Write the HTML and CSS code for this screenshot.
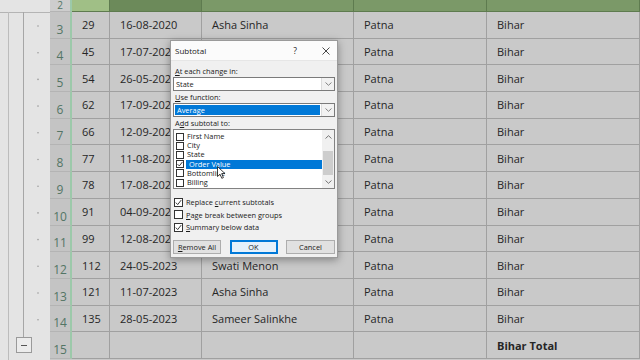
FILE: index.html
```html
<!DOCTYPE html>
<html lang="en">
  <head>
    <meta charset="UTF-8" />
    <title>Subtotal</title>
    <link rel="stylesheet" href="styles.css">
  </head>
  <body>
    <div class="wrap">
      <!-- outline gutter -->
      <div class="outline">
        <svg width="50" height="360" viewBox="0 0 50 360">
          <line x1="0" y1="12.5" x2="50" y2="12.5" stroke="#b4b4b4" />
          <line x1="8.5" y1="12" x2="8.5" y2="360" stroke="#bcbcbc" />
          <line x1="23.5" y1="12" x2="23.5" y2="338" stroke="#a6a6a6" />
          <g fill="#9c9c9c">
            <circle cx="38" cy="26" r="0.8" />
            <circle cx="38" cy="52.7" r="0.8" />
            <circle cx="38" cy="79.4" r="0.8" />
            <circle cx="38" cy="106.1" r="0.8" />
            <circle cx="38" cy="132.8" r="0.8" />
            <circle cx="38" cy="159.5" r="0.8" />
            <circle cx="38" cy="186.2" r="0.8" />
            <circle cx="38" cy="212.9" r="0.8" />
            <circle cx="38" cy="239.6" r="0.8" />
            <circle cx="38" cy="266.3" r="0.8" />
            <circle cx="38" cy="293" r="0.8" />
            <circle cx="38" cy="319.7" r="0.8" />
          </g>
          <rect x="16.5" y="337.5" width="15" height="15" fill="#ececec" stroke="#9a9a9a" />
          <line x1="21" y1="345.5" x2="27" y2="345.5" stroke="#555" />
        </svg>
      </div>

      <div class="sheet">
        <div class="cell rh top">2</div>
        <div class="cell h ha"></div>
        <div class="cell h hb"></div>
        <div class="cell h"></div>
        <div class="cell h"></div>
        <div class="cell h"></div>

        <div class="cell rh">3</div>
        <div class="cell">29</div><div class="cell">16-08-2020</div><div class="cell">Asha Sinha</div><div class="cell">Patna</div><div class="cell">Bihar</div>
        <!-- names of rows 4-11 sit under the dialog -->
        <div class="cell rh">4</div>
        <div class="cell">45</div><div class="cell">17-07-2021</div><div class="cell"></div><div class="cell">Patna</div><div class="cell">Bihar</div>
        <div class="cell rh">5</div>
        <div class="cell">54</div><div class="cell">26-05-2021</div><div class="cell"></div><div class="cell">Patna</div><div class="cell">Bihar</div>
        <div class="cell rh">6</div>
        <div class="cell">62</div><div class="cell">17-09-2021</div><div class="cell"></div><div class="cell">Patna</div><div class="cell">Bihar</div>
        <div class="cell rh">7</div>
        <div class="cell">66</div><div class="cell">12-09-2022</div><div class="cell"></div><div class="cell">Patna</div><div class="cell">Bihar</div>
        <div class="cell rh">8</div>
        <div class="cell">77</div><div class="cell">11-08-2022</div><div class="cell"></div><div class="cell">Patna</div><div class="cell">Bihar</div>
        <div class="cell rh">9</div>
        <div class="cell">78</div><div class="cell">17-08-2022</div><div class="cell"></div><div class="cell">Patna</div><div class="cell">Bihar</div>
        <div class="cell rh">10</div>
        <div class="cell">91</div><div class="cell">04-09-2022</div><div class="cell"></div><div class="cell">Patna</div><div class="cell">Bihar</div>
        <div class="cell rh">11</div>
        <div class="cell">99</div><div class="cell">12-08-2022</div><div class="cell"></div><div class="cell">Patna</div><div class="cell">Bihar</div>
        <div class="cell rh">12</div>
        <div class="cell">112</div><div class="cell">24-05-2023</div><div class="cell">Swati Menon</div><div class="cell">Patna</div><div class="cell">Bihar</div>
        <div class="cell rh">13</div>
        <div class="cell">121</div><div class="cell">11-07-2023</div><div class="cell">Asha Sinha</div><div class="cell">Patna</div><div class="cell">Bihar</div>
        <div class="cell rh">14</div>
        <div class="cell">135</div><div class="cell">28-05-2023</div><div class="cell">Sameer Salinkhe</div><div class="cell">Patna</div><div class="cell">Bihar</div>
        <div class="cell rh">15</div>
        <div class="cell"></div><div class="cell"></div><div class="cell"></div><div class="cell"></div><div class="cell total">Bihar Total</div>
      </div>
    </div>

    <!-- Subtotal dialog -->
    <div class="dialog">
      <div class="dlg-title">
        <span>Subtotal</span>
        <span class="help">?</span>
        <svg class="close" width="8" height="8" viewBox="0 0 8 8"><path d="M0.5 0.5L7.5 7.5M7.5 0.5L0.5 7.5" stroke="#333" stroke-width="0.9" fill="none" /></svg>
      </div>
      <div class="dlg-body">
        <div class="lbl first"><u>A</u>t each change in:</div>
        <div class="combo">
          <span class="val">State</span>
          <span class="arr"><svg width="7" height="4" viewBox="0 0 7 4"><path d="M0.5 0.5L3.5 3.3L6.5 0.5" stroke="#777" fill="none" stroke-width="0.9" /></svg></span>
        </div>
        <div class="lbl"><u>U</u>se function:</div>
        <div class="combo sel">
          <span class="val">Average</span>
          <span class="arr"><svg width="7" height="4" viewBox="0 0 7 4"><path d="M0.5 0.5L3.5 3.3L6.5 0.5" stroke="#777" fill="none" stroke-width="0.9" /></svg></span>
        </div>
        <div class="lbl">A<u>d</u>d subtotal to:</div>
        <div class="list">
          <div class="items">
            <div class="item"><span class="cb"></span><span class="txt">First Name</span></div>
            <div class="item"><span class="cb"></span><span class="txt">City</span></div>
            <div class="item"><span class="cb"></span><span class="txt">State</span></div>
            <div class="item on"><span class="cb"><svg width="6" height="6" viewBox="0 0 6 6"><path d="M0.6 3.2L2.3 4.9L5.5 0.9" stroke="#222" fill="none" stroke-width="0.9" /></svg></span><span class="txt">Order Value</span></div>
            <div class="item"><span class="cb"></span><span class="txt">Bottomline</span></div>
            <div class="item"><span class="cb"></span><span class="txt">Billing</span></div>
          </div>
          <div class="sbar">
            <svg width="7" height="4" viewBox="0 0 7 4"><path d="M0.5 3.5L3.5 0.7L6.5 3.5" stroke="#666" fill="none" stroke-width="0.9" /></svg>
            <div class="thumb"></div>
            <svg width="7" height="4" viewBox="0 0 7 4"><path d="M0.5 0.5L3.5 3.3L6.5 0.5" stroke="#666" fill="none" stroke-width="0.9" /></svg>
          </div>
        </div>
        <div class="opts">
          <div class="opt"><span class="cb big"><svg width="7" height="7" viewBox="0 0 7 7"><path d="M0.8 3.6L2.7 5.6L6.2 1.1" stroke="#222" fill="none" stroke-width="0.9" /></svg></span><span>Replace <u>c</u>urrent subtotals</span></div>
          <div class="opt"><span class="cb big"></span><span><u>P</u>age break between groups</span></div>
          <div class="opt"><span class="cb big"><svg width="7" height="7" viewBox="0 0 7 7"><path d="M0.8 3.6L2.7 5.6L6.2 1.1" stroke="#222" fill="none" stroke-width="0.9" /></svg></span><span><u>S</u>ummary below data</span></div>
        </div>
        <div class="btns">
          <div class="btn"><span><u>R</u>emove All</span></div>
          <div class="btn ok">OK</div>
          <div class="btn wide">Cancel</div>
        </div>
      </div>
    </div>

    <!-- mouse pointer -->
    <svg class="pointer" width="10" height="14" viewBox="0 0 10 14">
      <path d="M0.5 0.5L0.5 10.5L3 8.2L4.8 12.3L6.4 11.6L4.7 7.6L8 7.6Z" fill="#fff" stroke="#111" stroke-width="0.8" />
    </svg>
  </body>
</html>
```

FILE: styles.css
```css
body {
  margin: 0;
  width: 640px;
  height: 360px;
  overflow: hidden;
  position: relative;
  background: #c8c8c8;
  font-family: "Open Sans", "Liberation Sans", sans-serif;
}

.wrap {
  display: flex;
  height: 360px;
}

/* outline gutter on the left */
.outline {
  width: 50px;
  flex: none;
  background: #e4e4e4;
}

.outline svg {
  display: block;
}

/* grid of cells */
.sheet {
  display: grid;
  grid-template-columns: 22px 38px 92px 152px 133px 153px;
  grid-template-rows: 12px repeat(13, 26.7px);
}

.cell {
  box-sizing: border-box;
  display: flex;
  align-items: center;
  padding-left: 10px;
  background: #c9c9c9;
  border-right: 1px solid #a0a0a0;
  border-bottom: 1px solid #a0a0a0;
  font-size: 11px;
  color: #262626;
  white-space: nowrap;
  overflow: hidden;
}

.cell.rh {
  padding: 0 0 1px;
  justify-content: center;
  align-items: flex-end;
  background: #c4c4c4;
  border-right: 2px solid #9cc9aa;
  border-bottom-color: #b4b4b4;
  font-size: 12px;
  line-height: 14px;
  color: #537565;
}

.cell.rh.top {
  align-items: center;
  padding: 0;
  line-height: 11px;
  font-size: 10px;
  background: #cdcdcd;
}

.cell.h {
  background: #7b9968;
  border-color: #5e7b4f;
}

.cell.ha {
  background: #a0bf86;
}

.cell.hb {
  background: #6c8a5a;
}

.cell.total {
  font-weight: bold;
}

/* Subtotal dialog */
.dialog {
  position: absolute;
  left: 170px;
  top: 40px;
  width: 168px;
  height: 218px;
  box-sizing: border-box;
  background: #f0f0f0;
  border: 1px solid #9a9a9a;
  box-shadow: 0 2px 8px rgba(0, 0, 0, 0.35);
  font-size: 7.4px;
  color: #1a1a1a;
}

.dlg-title {
  height: 19px;
  display: flex;
  align-items: center;
  padding-left: 4px;
  background: #fbfbfb;
  border-bottom: 1px solid #e6e6e6;
  font-size: 8px;
}

.dlg-title .help {
  margin-left: auto;
  font-size: 8.5px;
}

.dlg-title .close {
  margin: 0 7px 0 25px;
}

.dlg-body {
  padding: 0 2px;
}

.lbl {
  height: 10px;
  line-height: 10px;
  padding-left: 2px;
  margin-top: 1px;
}

.lbl.first {
  margin-top: 5px;
}

.combo {
  box-sizing: border-box;
  height: 14px;
  margin: 1px 0 0;
  display: flex;
  align-items: center;
  background: #fff;
  border: 1px solid #7a7a7a;
}

.combo .val {
  flex: 1;
  padding-left: 2px;
  line-height: 10px;
}

.combo.sel .val {
  align-self: stretch;
  margin: 1px;
  line-height: 10px;
  background: #0078d7;
  color: #fff;
}

.combo .arr {
  width: 12px;
  align-self: stretch;
  display: flex;
  align-items: center;
  justify-content: center;
  background: #f2f2f2;
  border-left: 1px solid #dcdcdc;
}

.list {
  box-sizing: border-box;
  height: 60px;
  margin-top: 1px;
  display: flex;
  background: #fff;
  border: 1px solid #828282;
}

.items {
  flex: 1;
  padding: 2px 0 0 2px;
}

.item {
  height: 9.2px;
  display: flex;
  align-items: center;
}

.cb {
  box-sizing: border-box;
  width: 8px;
  height: 8px;
  flex: none;
  display: flex;
  align-items: center;
  justify-content: center;
  background: #fff;
  border: 1px solid #333;
}

.cb.big {
  width: 9px;
  height: 9px;
  margin-right: 3px;
}

.item .txt {
  margin-left: 2px;
  padding-left: 1px;
  line-height: 9px;
}

.item.on .txt {
  flex: 1;
  background: #0078d7;
  color: #fff;
  padding-left: 3px;
}

.sbar {
  width: 12px;
  display: flex;
  flex-direction: column;
  align-items: center;
  justify-content: space-between;
  padding: 5px 0 4px;
  background: #f0f0f0;
}

.thumb {
  width: 10px;
  height: 24px;
  margin-top: 6px;
  background: #cdcdcd;
}

.opts {
  margin-top: 7px;
  padding-left: 1px;
}

.opt {
  height: 12.5px;
  display: flex;
  align-items: center;
}

.btns {
  display: flex;
  justify-content: space-between;
  margin-top: 6px;
}

.btn {
  box-sizing: border-box;
  width: 48px;
  height: 14px;
  display: flex;
  align-items: center;
  justify-content: center;
  background: #e1e1e1;
  border: 1px solid #adadad;
}

.btn.wide {
  width: 49px;
}

.btn.ok {
  background: #e5f1fb;
  border-color: #0078d7;
  box-shadow: inset 0 0 0 1px #0078d7;
}

.pointer {
  position: absolute;
  left: 217px;
  top: 166px;
}
```
